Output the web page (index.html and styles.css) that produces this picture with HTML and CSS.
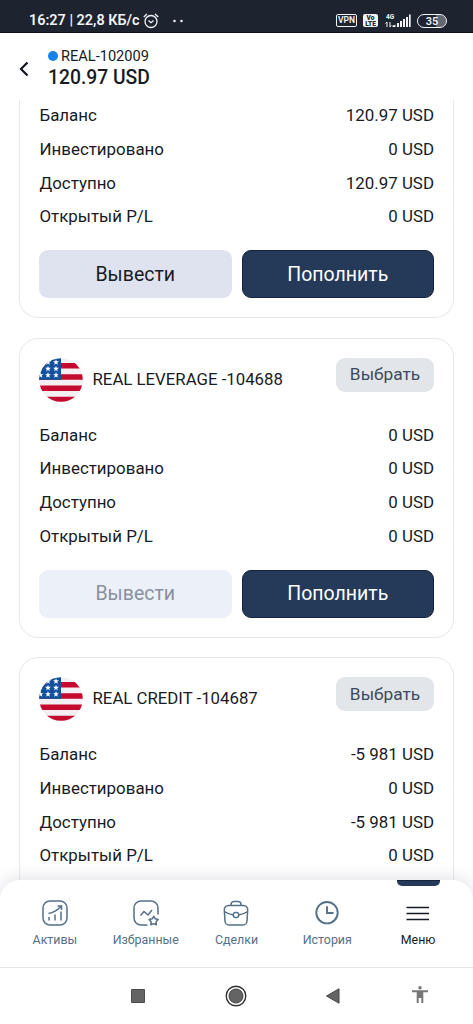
FILE: index.html
```html
<!DOCTYPE html>
<html lang="ru">
<head>
<meta charset="utf-8">
<title>Счета</title>
<link rel="stylesheet" href="styles.css">
</head>
<body>
<svg class="defs" width="0" height="0" aria-hidden="true">
  <defs>
    <clipPath id="disc"><circle cx="22" cy="22" r="21.8"/></clipPath>
    <path id="star" d="M0-3.1.8-1H3L1.2.4 1.9 2.6 0 1.3-1.9 2.6-1.2.4-3-1H-.8z"/>
    <symbol id="flag" viewBox="0 0 44 44">
      <g clip-path="url(#disc)">
        <rect width="44" height="44" fill="#f3eff3"/>
        <path fill="#c40a2f" d="M0 5h44v5.600H0zM0 16.200h44v5.600H0zM0 27.500h44v5.600H0zM0 38.800h44V44H0z"/>
        <rect width="22" height="21.800" fill="#124f9c"/>
        <g fill="#fff">
          <use href="#star" x="17" y="4.300"/><use href="#star" x="9" y="4.300"/>
          <use href="#star" x="9" y="10.800"/><use href="#star" x="17" y="10.800"/>
          <use href="#star" x="1.500" y="17.200"/><use href="#star" x="9" y="17.200"/><use href="#star" x="17" y="17.200"/>
        </g>
      </g>
    </symbol>
  </defs>
</svg>
<div class="screen">
  <div class="status">
    <span class="clock">16:27 | 22,8 КБ/с</span>
    <svg class="alarm" width="16" height="16" viewBox="0 0 16 16" fill="none" stroke="#f2f3f5" stroke-width="1.300"><circle cx="8" cy="8.500" r="6"/><path d="M.8 4 4 1M15.200 4 12 1M5.500 7.500 8 9.700l2.500-2.200"/></svg>
    <svg class="dots" width="10" height="4" viewBox="0 0 10 4" fill="#e6e8eb"><circle cx="1.500" cy="2" r="1.300"/><circle cx="8.500" cy="2" r="1.300"/></svg>
    <span class="vpn">VPN</span>
    <span class="volte"><span>Vo</span><span>LTE</span></span>
    <span class="signal">
      <span class="gen">4G</span>
      <svg width="26" height="14" viewBox="0 0 26 14" fill="#f2f3f5"><path d="M7.500 13v-1.500l3-.8V13zM12 13v-4h2v4zM15 13V7h2v6zM18 13V5h2v8zM21 13V3h2v10zM24 13V.5h1.700V13z"/><path d="M2 13V8M.5 9.500 2 8M5 8v5l1.300-1.500" fill="none" stroke="#f2f3f5"/></svg>
    </span>
    <span class="battery">35</span>
  </div>

  <header class="header">
    <svg class="back" width="10" height="16" viewBox="0 0 10 16" fill="none" stroke="#111722" stroke-width="2.200"><path d="M8.500 1.500 2 8l6.500 6.500"/></svg>
    <div>
      <div class="account"><i class="dot"></i>REAL-102009</div>
      <div class="total">120.97 USD</div>
    </div>
  </header>

  <main class="list">
    <section class="card card-cut">
      <dl class="rows">
        <div class="row"><dt>Баланс</dt><dd>120.97 USD</dd></div>
        <div class="row"><dt>Инвестировано</dt><dd>0 USD</dd></div>
        <div class="row"><dt>Доступно</dt><dd>120.97 USD</dd></div>
        <div class="row"><dt>Открытый P/L</dt><dd>0 USD</dd></div>
      </dl>
      <div class="actions"><button class="btn light">Вывести</button><button class="btn dark">Пополнить</button></div>
    </section>

    <section class="card">
      <div class="card-head"><svg class="flag"><use href="#flag"/></svg><span class="name">REAL LEVERAGE -104688</span><button class="pick">Выбрать</button></div>
      <dl class="rows">
        <div class="row"><dt>Баланс</dt><dd>0 USD</dd></div>
        <div class="row"><dt>Инвестировано</dt><dd>0 USD</dd></div>
        <div class="row"><dt>Доступно</dt><dd>0 USD</dd></div>
        <div class="row"><dt>Открытый P/L</dt><dd>0 USD</dd></div>
      </dl>
      <div class="actions"><button class="btn muted">Вывести</button><button class="btn dark">Пополнить</button></div>
    </section>

    <section class="card">
      <div class="card-head"><svg class="flag"><use href="#flag"/></svg><span class="name">REAL CREDIT -104687</span><button class="pick">Выбрать</button></div>
      <dl class="rows">
        <div class="row"><dt>Баланс</dt><dd>-5 981 USD</dd></div>
        <div class="row"><dt>Инвестировано</dt><dd>0 USD</dd></div>
        <div class="row"><dt>Доступно</dt><dd>-5 981 USD</dd></div>
        <div class="row"><dt>Открытый P/L</dt><dd>0 USD</dd></div>
      </dl>
    </section>
  </main>

  <nav class="tabs">
    <div class="tab">
      <svg width="26" height="26" viewBox="0 0 26 26"><rect x="1" y="1" width="24" height="24" rx="7"/><path d="M7 20.500v-3.500M13 20.500v-6M19 20.500v-9M6.500 13.500C12 12.500 15 10.500 19 6.500M15.500 6H19.500v4"/></svg>
      <span>Активы</span>
    </div>
    <div class="tab">
      <svg width="26" height="26" viewBox="0 0 26 26"><path d="M14.500 25H8a7 7 0 0 1-7-7V8a7 7 0 0 1 7-7h10a7 7 0 0 1 7 7v6.500M7.500 15.500l3.500-4 4 3.500 4-5"/><path stroke-linejoin="round" d="m20.800 16.300 1.400 2.500 2.900.7-2 2.300.2 3-2.700-1.200-2.700 1.200.2-3-2-2.300 3-.7z"/></svg>
      <span>Избранные</span>
    </div>
    <div class="tab">
      <svg width="26" height="26" viewBox="0 0 26 26"><path d="M8 5.500V4.500A3 3 0 0 1 11 1.500h4a3 3 0 0 1 3 3v1M5.500 5.500h15a4.200 4.200 0 0 1 4.200 4.500l-.7 11a4 4 0 0 1-4 4H6a4 4 0 0 1-4-4L1.300 10A4.200 4.200 0 0 1 5.500 5.500zM1.500 11.500c3 2.100 6 3.200 8.800 3.500M24.500 11.500c-3 2.100-6 3.200-8.800 3.500"/><rect x="10.400" y="12.600" width="5.200" height="5" rx="2"/></svg>
      <span>Сделки</span>
    </div>
    <div class="tab">
      <svg width="26" height="26" viewBox="0 0 26 26" class="bold"><circle cx="13" cy="12.700" r="10.700"/><path d="M13 6.200V13h6.500"/></svg>
      <span>История</span>
    </div>
    <div class="tab active">
      <svg width="26" height="26" viewBox="0 0 26 26"><path d="M1.500 7.500h22.500M1.500 13.500h22.500M1.500 19.500h22.500"/></svg>
      <span>Меню</span>
    </div>
  </nav>

  <div class="system">
    <svg width="22" height="22" viewBox="0 0 22 22"><path fill="#646464" stroke="#4d4d4d" d="M4.500 4.500h13v13h-13z"/></svg>
    <svg width="22" height="22" viewBox="0 0 22 22"><circle cx="11" cy="11" r="9.800" fill="#fff" stroke="#333" stroke-width="1.400"/><circle cx="11" cy="11" r="7" fill="#646464" stroke="#444"/></svg>
    <svg width="22" height="22" viewBox="0 0 22 22"><path fill="#646464" stroke="#444" d="M17 3.800v14.400L4.500 11z"/></svg>
    <svg width="22" height="22" viewBox="0 0 22 22" fill="#777"><circle cx="11" cy="2.700" r="1.700"/><path d="M3 5.200h16v2h-4.700V18h-2v-5h-2.600v5h-2V7.200H3z"/></svg>
  </div>
</div>
</body>
</html>
```
FILE: styles.css
```css
* { box-sizing: border-box; }
body { margin: 0; background: #fff; font-family: Roboto, "Noto Sans", sans-serif; color: #171b24; }
button { border: 0; padding: 0; font: inherit; color: inherit; }
svg { flex: none; }
.defs { display: block; }
.screen { width: 473px; height: 1024px; display: flex; flex-direction: column; overflow: hidden; }

.status { height: 33px; flex: none; display: flex; align-items: center; padding: 9px 26px 0 29px; background: #1d2430; border-bottom: 1px solid #0b0f18; color: #f2f3f5; }
.clock { font-size: 14.400px; font-weight: 600; width: 114px; white-space: nowrap; }
.dots { margin: 0 auto 0 14px; }
.vpn { width: 21px; height: 13px; border: 1.500px solid #f2f3f5; border-radius: 2px; font: 600 8.500px/11px Roboto, sans-serif; text-align: center; }
.volte { width: 15px; height: 13px; margin-left: 6px; border-radius: 2px; background: #f2f3f5; color: #1d2430; display: flex; flex-direction: column; align-items: center; font: 900 6.500px/6px Roboto, sans-serif; padding-top: .5px; }
.signal { margin-left: 7px; width: 26px; height: 14px; display: grid; }
.signal > * { grid-area: 1 / 1; }
.gen { font: 700 6.500px/6px Roboto, sans-serif; padding-left: 1px; }
.battery { margin-left: 6px; width: 30px; height: 14px; border: 1.500px solid #f2f3f5; border-radius: 7px; font: 600 11px/13px Roboto, sans-serif; text-align: center; background: linear-gradient(90deg, #1d2430 66%, #626770 66%); }

.header { height: 67px; flex: none; display: flex; padding: 13px 19px 0; }
.back { margin: 15px 19px 0 0; }
.account { display: flex; align-items: center; font-size: 14.600px; line-height: 20px; }
.dot { width: 10px; height: 10px; margin-right: 3px; border-radius: 50%; background: #1683ea; }
.total { font-size: 19.300px; line-height: 23px; font-weight: 500; }

.list { flex: 1; min-height: 0; overflow: hidden; padding: 0 19px; }
.card { height: 300px; border: 1px solid #e6e8ec; border-radius: 19px; padding: 19px; margin-bottom: 19.500px; }
.card-head { display: flex; align-items: flex-start; height: 60px; }
.flag { width: 44px; height: 44px; }
.name { margin-left: 9.500px; font-size: 16.800px; line-height: 43px; white-space: nowrap; }
.pick { margin-left: auto; width: 98px; height: 34px; border-radius: 9px; background: #e2e6ea; color: #3a4a5e; font-size: 17.300px; line-height: 33px; }
.rows { margin: 0; }
.row { display: flex; justify-content: space-between; height: 33.750px; line-height: 34px; font-size: 16.900px; }
.row dt { padding-left: .5px; }
.row dd { margin: 0; }
.actions { display: grid; grid-template-columns: 1fr 1fr; gap: 10px; margin-top: 17px; }
.btn { height: 48px; border-radius: 9px; font-size: 19.500px; }
.light { background: #dfe3ef; }
.muted { background: #ecf0f9; color: #88909d; }
.dark { background: #253a59; border: 1px solid #14223a; color: #fff; }

/* the first card is scrolled partly under the header */
.card-cut { height: 220px; border-top: 0; border-radius: 0 0 19px 19px; padding-top: 0; }
.card-cut .rows { margin-top: -2px; }

.tabs { height: 87px; flex: none; display: flex; padding: 0 9.500px; background: #fff; border-radius: 20px 20px 0 0; box-shadow: 0 -3px 16px rgba(40, 50, 75, .13); position: relative; clip-path: inset(-30px 0 0 0); }
.tab { flex: 1; display: flex; flex-direction: column; align-items: center; padding-top: 20px; color: #557089; font-size: 12.400px; line-height: 16px; }
.tab svg { fill: none; stroke: currentColor; stroke-width: 1.500; margin-bottom: 6px; }
.tab svg.bold { stroke-width: 1.900; }
.active { color: #151a24; }
.tab.active svg { stroke-width: 1.700; }
.active::before { content: ""; flex: none; width: 43px; height: 5px; margin: -20px 0 14px; background: #253a59; border-top: 1px solid #14223a; border-radius: 0 0 5px 5px; }

.system { height: 57px; flex: none; display: grid; grid-template-columns: 98px 97px 87px 22px; align-items: center; padding-left: 127px; border-top: 1px solid #e5e7ea; }
```
